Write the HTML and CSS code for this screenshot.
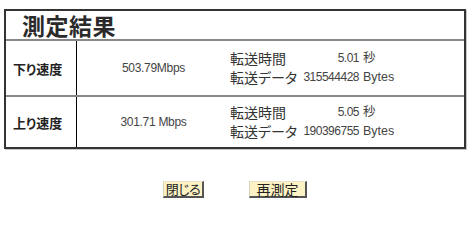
FILE: index.html
```html
<!DOCTYPE html>
<html lang="ja">
<head>
<meta charset="utf-8">
<title>測定結果</title>
<link rel="stylesheet" href="styles.css">
</head>
<body>
<div class="panel">
  <div class="title">測定結果</div>
  <div class="row row-first">
    <div class="label">下り速度</div>
    <div class="speed">503.79Mbps</div>
    <div class="info">
      <div class="info-label">転送時間</div><div class="num">5.01</div><div class="unit">秒</div>
      <div class="info-label">転送データ</div><div class="num">315544428</div><div class="unit">Bytes</div>
    </div>
  </div>
  <div class="row row-second">
    <div class="label">上り速度</div>
    <div class="speed">301.71 Mbps</div>
    <div class="info">
      <div class="info-label">転送時間</div><div class="num">5.05</div><div class="unit">秒</div>
      <div class="info-label">転送データ</div><div class="num">190396755</div><div class="unit">Bytes</div>
    </div>
  </div>
</div>
<div class="buttons">
  <button class="btn btn-close">閉じる</button>
  <button class="btn btn-retry">再測定</button>
</div>
</body>
</html>
```
FILE: styles.css
```css
html, body {
  margin: 0;
  padding: 0;
  background: #ffffff;
}
body {
  width: 470px;
  height: 205px;
  overflow: hidden;
  font-family: "Liberation Sans", "Noto Sans CJK JP", sans-serif;
  color: #333;
}
.panel {
  box-sizing: border-box;
  width: 462px;
  margin: 9px 0 0 4px;
  border: 2px solid #333;
  box-shadow: 1px 1px 0 #c8c8c8;
}
.title {
  height: 28px;
  line-height: 28px;
  padding-left: 16px;
  border-bottom: 2px solid #888;
  font-family: "Noto Sans CJK JP", sans-serif;
  font-weight: bold;
  font-size: 23px;
  color: #2a2a2a;
  letter-spacing: 0.5px;
}
.row {
  display: grid;
  grid-template-columns: 71px 151px 1fr;
}
.row-first {
  height: 54px;
}
.row-second {
  height: 50px;
  border-top: 2px solid #888;
}
.label {
  display: flex;
  align-items: center;
  padding-left: 7px;
  border-right: 1px solid #000;
  font-family: "Noto Sans CJK JP", sans-serif;
  font-weight: bold;
  font-size: 13px;
  color: #222;
  font-feature-settings: "palt";
}
.speed {
  display: flex;
  align-items: center;
  justify-content: center;
  font-size: 12px;
  color: #444;
  letter-spacing: -0.3px;
  padding-left: 2px;
}
.info {
  display: grid;
  grid-template-columns: 70px 59px auto;
  align-content: center;
  line-height: 19px;
  padding-left: 2px;
}
.info-label {
  font-family: "Noto Sans CJK JP", sans-serif;
  font-size: 14px;
  color: #333;
  font-feature-settings: "palt";
  white-space: nowrap;
}
.num {
  text-align: right;
  font-size: 12px;
  color: #444;
  letter-spacing: -0.5px;
  white-space: nowrap;
}
.unit {
  padding-left: 4px;
  font-family: "Liberation Sans", "Noto Sans CJK JP", sans-serif;
  font-size: 12.5px;
  color: #444;
  white-space: nowrap;
}
.buttons {
  display: flex;
  justify-content: center;
  gap: 45px;
  margin-top: 32px;
}
.btn {
  box-sizing: border-box;
  height: 17px;
  padding: 0;
  margin: 0;
  background: #fcf2c4;
  border-top: 1px solid #e8e2c8;
  border-left: 1px solid #d8d2b8;
  border-right: 2px solid #555;
  border-bottom: 2px solid #555;
  font-family: "Noto Sans CJK JP", sans-serif;
  font-size: 14px;
  line-height: 14px;
  color: #222;
  font-feature-settings: "palt";
  text-align: center;
  white-space: nowrap;
}
.btn-close {
  width: 41px;
  font-size: 13px;
  letter-spacing: -0.5px;
}
.btn-retry {
  width: 58px;
}
```
